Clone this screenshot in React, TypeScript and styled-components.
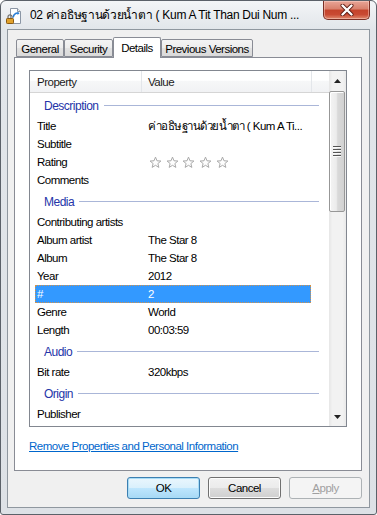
import React from "react";
import styled, { createGlobalStyle } from "styled-components";

const GlobalStyle = createGlobalStyle`
  html, body { margin: 0; padding: 0; background: #ffffff; }
  body {
    font-family: "Liberation Sans", "Noto Sans", "DejaVu Sans", sans-serif;
    font-size: 11.5px;
    letter-spacing: -0.5px;
    color: #000;
  }
  * { box-sizing: border-box; }
`;

const Window = styled.div`
  width: 377px;
  height: 515px;
  border: 1px solid #5b6169;
  border-radius: 6px 6px 3px 3px;
  background: linear-gradient(to bottom, #f3f5f7 0px, #e2e6ea 28px, #dde1e6 100%);
  display: flex;
  flex-direction: column;
  overflow: hidden;
`;

const TitleBar = styled.div`
  height: 28px;
  flex: none;
  display: flex;
  align-items: flex-start;
  padding-left: 5px;
`;

const TitleIcon = styled.svg`
  width: 16px;
  height: 16px;
  margin-top: 7px;
  flex: none;
`;

const TitleText = styled.div`
  margin-left: 8px;
  margin-top: 6px;
  font-size: 12px;
  line-height: 16px;
  white-space: nowrap;
  overflow: hidden;
  width: 286px;
  letter-spacing: -0.3px;
`;

const CloseButton = styled.div`
  margin-left: auto;
  margin-right: 6px;
  width: 47px;
  height: 19px;
  border: 1px solid #7a2f25;
  border-top: none;
  border-radius: 0 0 5px 5px;
  background: linear-gradient(to bottom, #e8a597 0%, #d8806c 45%, #c4432b 50%, #c94a33 75%, #e08a6f 100%);
  box-shadow: inset 0 0 0 1px rgba(255, 220, 210, 0.45);
  display: flex;
  align-items: center;
  justify-content: center;
  flex: none;
`;

const Client = styled.div`
  flex: 1;
  margin: 0 6px 6px 6px;
  border: 1px solid #8f979f;
  background: #f0f0f0;
  padding: 7px 7px 0 6px;
  display: flex;
  flex-direction: column;
`;

const TabStrip = styled.div`
  height: 20px;
  display: flex;
  align-items: flex-end;
  padding-left: 2px;
  position: relative;
  z-index: 1;
`;

const Tab = styled.div<{ $w: number; $active?: boolean }>`
  width: ${(p) => p.$w}px;
  height: ${(p) => (p.$active ? 21 : 18)}px;
  margin-bottom: ${(p) => (p.$active ? -1 : 0)}px;
  border: 1px solid #898c95;
  border-bottom: ${(p) => (p.$active ? "none" : "1px solid #898c95")};
  border-radius: 2px 2px 0 0;
  background: ${(p) =>
    p.$active
      ? "#ffffff"
      : "linear-gradient(to bottom, #f4f4f4 0%, #ececec 50%, #e2e2e2 51%, #dadada 100%)"};
  display: flex;
  align-items: center;
  justify-content: center;
  padding-top: ${(p) => (p.$active ? 0 : 2)}px;
  font-size: 11.5px;
  white-space: nowrap;
  flex: none;
`;

const Panel = styled.div`
  width: 348px;
  height: 414px;
  border: 1px solid #898c95;
  background: #ffffff;
  padding: 12px 0 0 14px;
  display: flex;
  flex-direction: column;
  flex: none;
`;

const ListView = styled.div`
  width: 318px;
  height: 357px;
  border: 1px solid #828790;
  display: flex;
  flex: none;
`;

const ListContent = styled.div`
  width: 299px;
  display: flex;
  flex-direction: column;
  overflow: hidden;
`;

const Header = styled.div`
  height: 22px;
  flex: none;
  display: flex;
  border-bottom: 1px solid #d5d5d5;
  background: linear-gradient(to bottom, #ffffff 0%, #ffffff 45%, #f6f7f8 46%, #f1f2f4 100%);
`;

const HeaderCell = styled.div<{ $w?: number }>`
  width: ${(p) => (p.$w ? `${p.$w}px` : "auto")};
  flex: ${(p) => (p.$w ? "none" : "1")};
  border-right: ${(p) => (p.$w ? "1px solid #e3e6ea" : "none")};
  padding-left: ${(p) => (p.$w === 112 ? 7 : 6)}px;
  display: flex;
  align-items: center;
  color: #1b1b1b;
`;

const GroupHeader = styled.div`
  height: 24px;
  flex: none;
  display: flex;
  align-items: center;
  padding-left: 14px;
  padding-right: 10px;
  padding-top: 1px;
  color: #2434a8;
  font-size: 12px;
`;

const GroupLine = styled.div`
  flex: 1;
  height: 1px;
  margin-left: 5px;
  background: #aab6d8;
`;

const Row = styled.div<{ $selected?: boolean }>`
  height: 18px;
  flex: none;
  width: 276px;
  margin-left: 5px;
  display: grid;
  grid-template-columns: 111px 1fr;
  align-items: center;
  background: ${(p) => (p.$selected ? "#3399ff" : "transparent")};
  color: ${(p) => (p.$selected ? "#ffffff" : "#000000")};
  outline: ${(p) => (p.$selected ? "1px dotted #d2924a" : "none")};
  outline-offset: -1px;
`;

const Cell = styled.div`
  padding-left: 2px;
  white-space: nowrap;
  overflow: hidden;
  display: flex;
  align-items: center;
`;

const Stars = styled.div`
  display: flex;
  gap: 3.7px;
  padding-left: 1px;
`;

const ScrollBar = styled.div`
  width: 17px;
  flex: none;
  display: flex;
  flex-direction: column;
  background: linear-gradient(to right, #e6e6e6 0%, #f2f2f2 20%, #f2f2f2 80%, #e9e9e9 100%);
`;

const ArrowBox = styled.div<{ $h: number }>`
  height: ${(p) => p.$h}px;
  flex: none;
  display: flex;
  align-items: center;
  justify-content: center;
`;

const Thumb = styled.div`
  height: 121px;
  width: 16px;
  margin-top: 1px;
  flex: none;
  border: 1px solid #979797;
  border-radius: 2px;
  background: linear-gradient(to right, #f4f4f4 0%, #ececec 45%, #d9d9d9 55%, #d2d2d2 100%);
  box-shadow: inset 1px 1px 0 #ffffff;
  display: flex;
  align-items: center;
  justify-content: center;
`;

const Grip = styled.div`
  width: 8px;
  display: flex;
  flex-direction: column;
  gap: 1px;
`;

const GripLine = styled.div`
  height: 1px;
  background: #555;
  box-shadow: 0 1px 0 #fbfbfb;
  margin-bottom: 1px;
`;

const Track = styled.div`
  flex: 1;
`;

const Link = styled.a`
  margin-top: 12px;
  color: #0066cc;
  text-decoration: underline;
  font-size: 11.5px;
  line-height: 14px;
  align-self: flex-start;
  cursor: pointer;
`;

const ButtonRow = styled.div`
  margin-top: 6px;
  display: flex;
  justify-content: flex-end;
  gap: 8px;
  width: 348px;
`;

const Button = styled.div<{ $default?: boolean; $disabled?: boolean }>`
  width: 73px;
  height: 22px;
  border: 1px solid ${(p) => (p.$default ? "#3c7fb1" : p.$disabled ? "#adb2b5" : "#707070")};
  border-radius: 3px;
  background: ${(p) =>
    p.$disabled
      ? "#f4f4f4"
      : p.$default
      ? "linear-gradient(to bottom, #eaf6fd 0%, #d9f0fc 50%, #bee6fd 51%, #a7d9f5 100%)"
      : "linear-gradient(to bottom, #f2f2f2 0%, #ebebeb 50%, #dddddd 51%, #cfcfcf 100%)"};
  box-shadow: inset 0 0 0 1px ${(p) => (p.$disabled ? "transparent" : p.$default ? "#a8dcf6" : "#fcfcfc")};
  color: ${(p) => (p.$disabled ? "#a0a0a0" : "#000")};
  display: flex;
  align-items: center;
  justify-content: center;
  font-size: 11.5px;
`;

const Star = () => (
  <svg width="13" height="13" viewBox="0 0 13 13">
    <polygon
      points="6.5,1.1 7.97,4.78 11.92,5.04 8.88,7.57 9.85,11.41 6.5,9.3 3.15,11.41 4.12,7.57 1.08,5.04 5.03,4.78"
      fill="#fdfdfd"
      stroke="#a9a9a9"
      strokeWidth="1"
      strokeLinejoin="round"
    />
  </svg>
);

type Item =
  | { kind: "group"; label: string }
  | { kind: "row"; label: string; value?: React.ReactNode; selected?: boolean };

const items: Item[] = [
  { kind: "group", label: "Description" },
  { kind: "row", label: "Title", value: "ค่าอธิษฐานด้วยน้ำตา ( Kum A Ti..." },
  { kind: "row", label: "Subtitle" },
  {
    kind: "row",
    label: "Rating",
    value: (
      <Stars>
        <Star />
        <Star />
        <Star />
        <Star />
        <Star />
      </Stars>
    ),
  },
  { kind: "row", label: "Comments" },
  { kind: "group", label: "Media" },
  { kind: "row", label: "Contributing artists" },
  { kind: "row", label: "Album artist", value: "The Star 8" },
  { kind: "row", label: "Album", value: "The Star 8" },
  { kind: "row", label: "Year", value: "2012" },
  { kind: "row", label: "#", value: "2", selected: true },
  { kind: "row", label: "Genre", value: "World" },
  { kind: "row", label: "Length", value: "00:03:59" },
  { kind: "group", label: "Audio" },
  { kind: "row", label: "Bit rate", value: "320kbps" },
  { kind: "group", label: "Origin" },
  { kind: "row", label: "Publisher" },
];

export default function App() {
  return (
    <>
      <GlobalStyle />
      <Window>
        <TitleBar>
          <TitleIcon viewBox="0 0 16 16">
            <path d="M4.5 0.5 H11.5 L14.5 3.5 V15.5 H4.5 Z" fill="#ffffff" stroke="#8b96a5" />
            <path d="M11.5 0.5 V3.5 H14.5" fill="#e8ecf0" stroke="#8b96a5" />
            <path d="M7 9.5 C8 5 11 4.5 13 5.5" fill="none" stroke="#2c7fd6" strokeWidth="1.6" />
            <path d="M11.5 3.8 L13.5 5.6 L11.2 6.8 Z" fill="#2c7fd6" />
            <path d="M2 10.5 V8.8 A2 2 0 0 1 6 8.8 V10.5" fill="none" stroke="#6f6f6f" strokeWidth="1.2" />
            <rect x="0.5" y="10.5" width="7" height="5" rx="0.8" fill="#e0a12c" stroke="#8a5a12" />
          </TitleIcon>
          <TitleText>02 ค่าอธิษฐานด้วยน้ำตา ( Kum A Tit Than Dui Num ...</TitleText>
          <CloseButton>
            <svg width="14" height="12" viewBox="0 0 14 12">
              <path d="M2.5 1.5 L11.5 10.5 M11.5 1.5 L2.5 10.5" stroke="#5a1a12" strokeWidth="4" strokeLinecap="round" />
              <path d="M2.5 1.5 L11.5 10.5 M11.5 1.5 L2.5 10.5" stroke="#ffffff" strokeWidth="2.4" strokeLinecap="round" />
            </svg>
          </CloseButton>
        </TitleBar>
        <Client>
          <TabStrip>
            <Tab $w={48}>General</Tab>
            <Tab $w={49}>Security</Tab>
            <Tab $w={48} $active>
              Details
            </Tab>
            <Tab $w={92}>Previous Versions</Tab>
          </TabStrip>
          <Panel>
            <ListView>
              <ListContent>
                <Header>
                  <HeaderCell $w={112}>Property</HeaderCell>
                  <HeaderCell $w={170}>Value</HeaderCell>
                  <HeaderCell />
                </Header>
                {items.map((it, i) =>
                  it.kind === "group" ? (
                    <GroupHeader key={i}>
                      {it.label}
                      <GroupLine />
                    </GroupHeader>
                  ) : (
                    <Row key={i} $selected={it.selected}>
                      <Cell>{it.label}</Cell>
                      <Cell>{it.value}</Cell>
                    </Row>
                  )
                )}
              </ListContent>
              <ScrollBar>
                <ArrowBox $h={19}>
                  <svg width="7" height="4" viewBox="0 0 7 4">
                    <path d="M0 4 L3.5 0 L7 4 Z" fill="#222" />
                  </svg>
                </ArrowBox>
                <Thumb>
                  <Grip>
                    <GripLine />
                    <GripLine />
                    <GripLine />
                    <GripLine />
                  </Grip>
                </Thumb>
                <Track />
                <ArrowBox $h={18}>
                  <svg width="7" height="4" viewBox="0 0 7 4">
                    <path d="M0 0 L7 0 L3.5 4 Z" fill="#222" />
                  </svg>
                </ArrowBox>
              </ScrollBar>
            </ListView>
            <Link>Remove Properties and Personal Information</Link>
          </Panel>
          <ButtonRow>
            <Button $default>OK</Button>
            <Button>Cancel</Button>
            <Button $disabled>
              <span>
                <u>A</u>pply
              </span>
            </Button>
          </ButtonRow>
        </Client>
      </Window>
    </>
  );
}
